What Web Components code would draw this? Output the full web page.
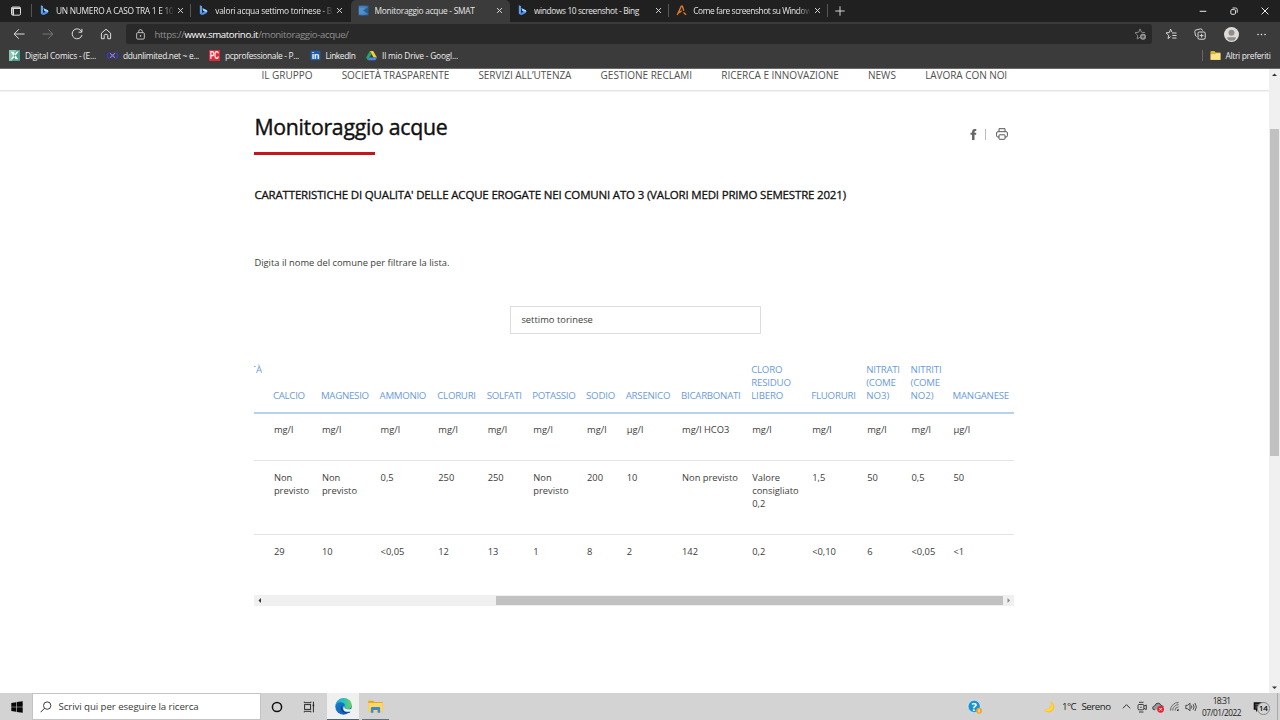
<!DOCTYPE html>
<html lang="it">
<head>
<meta charset="utf-8">
<title>Monitoraggio acque - SMAT</title>
<style>
html,body{margin:0;height:100%;overflow:hidden}
body{font-family:"Open Sans","Noto Sans",sans-serif;background:#fff}
</style>
</head>
<body>
<desktop-screen></desktop-screen>
<script>
const define = (name, html, setup) => customElements.define(name, class extends HTMLElement {
  connectedCallback() {
    if (this.shadowRoot) return;
    const t = document.createElement('template');
    t.innerHTML = typeof html === 'function' ? html(this) : html;
    this.attachShadow({mode: 'open'}).append(t.content.cloneNode(true));
    if (setup) setup(this);
  }
});

/* Inline label whose tracking is adjusted to a given width */
define('fit-text', `<style>:host{display:inline-block;flex:none;white-space:nowrap}</style><slot></slot>`, el => {
  const w = parseFloat(el.getAttribute('w')), n = el.textContent.length;
  if (w) el.style.letterSpacing = ((w - el.getBoundingClientRect().width) / n).toFixed(4) + 'px';
});

const ICONS = {
  tabs: '<rect x="1.5" y="2" width="9" height="8.2" rx="1.4" fill="none" stroke="#ddd"/><path d="M1.5 3.2h9M3.2 4v6" stroke="#ddd" stroke-width="1.6"/>',
  bing: '<path d="M2 .3L4.4 1.2V8L2.6 10 2 9.4Z" fill="#5ba2f2"/><path d="M4.9 3.5L9.6 5.6Q10.7 7 9.6 8.6L5.2 11Q3 11 2.3 9.6L7 7.3 5.8 6.5Z" fill="#4b8ff0"/><path d="M4.9 3.5L9.6 5.6Q10.4 6.4 10 7.5L5.8 6.3Z" fill="#a8d8fb"/>',
  smat: '<rect x=".5" y=".5" width="11" height="11" fill="#2b5c92"/><path d="M11.5 2L6 .8 1 1v10l5 .2 5.5-1.2L6.200 6Z" fill="#3f7fbd"/><path d="M1 3h7L5 6l4 3.5H1" fill="#5591c9"/>',
  orange: '<path d="M1.300 11L5.800 1.200h1.200l1.500 5M3.500 8.400l2.700-2.200M8.200 8.200l2.800 2.500" fill="none" stroke="#e37a2a" stroke-width="1.5"/>',
  close: '<path d="M3.3 3.3l5.4 5.4M8.7 3.3L3.3 8.7" stroke="#e2e2e2" stroke-width="1"/>',
  plus: '<path d="M6 1.3v9.4M1.3 6h9.4" stroke="#ddd" stroke-width=".95"/>',
  min: '<path d="M2.7 6.3h6.6" stroke="#ddd" stroke-width="1.1"/>',
  restore: '<rect x="2.8" y="4.6" width="4.7" height="4.7" rx="1.2" fill="none" stroke="#ddd"/><path d="M4.5 3h3.2Q9.2 3 9.2 4.5v3.2" fill="none" stroke="#ddd"/>',
  x: '<path d="M2.6 2.6l6.8 6.8M9.4 2.6L2.6 9.4" stroke="#eee" stroke-width="1"/>',
  back: '<path d="M11.5 6H1.2M5.8 1.3L1.1 6l4.7 4.7" fill="none" stroke="#ddd" stroke-width="1"/>',
  fwd: '<path d="M.5 6h10.3M6.2 1.3L10.9 6l-4.7 4.7" fill="none" stroke="#777" stroke-width="1"/>',
  reload: '<path d="M10.8 4A5 5 0 1 0 11 7M10.9.8v3.4H7.5" fill="none" stroke="#ddd" stroke-width="1"/>',
  home: '<path d="M1.4 5.2L6 1.2l4.6 4v5.5H7.8V7.5Q7.8 6.3 6 6.3T4.2 7.5v3.2H1.4Z" fill="none" stroke="#ddd" stroke-width="1" stroke-linejoin="round"/>',
  lock: '<rect x="1.8" y="4" width="8.4" height="7" rx="1.2" fill="none" stroke="#ccc"/><path d="M4 4V2.7a2 2 0 0 1 4 0V4" fill="none" stroke="#ccc"/><circle cx="6" cy="7.5" r=".9" fill="#ccc"/>',
  staradd: '<path d="M6 9.200L3.1 11l.6-3.7L1 4.7l3.7-.5L6 .9l1.5 3.3 3.5.5" fill="none" stroke="#888"/><circle cx="9" cy="8.8" r="3" fill="#999"/><path d="M9 7.2v3.2M7.4 8.8h3.2" stroke="#333" stroke-width=".8"/>',
  favs: '<path d="M5.6 8.6L3 10.6l.7-3.3L1 4.9l3.3-.4L5.6 1.2l1.3 3M7 5h4.5M7.3 7.5h4.2M7.3 10h4.2" fill="none" stroke="#ddd" stroke-width=".95"/>',
  collect: '<rect x="4" y="4" width="7.2" height="7.2" rx="1.3" fill="none" stroke="#ddd"/><path d="M7.6 5.7v3.8M5.7 7.6h3.8M2.6 8.6Q1.6 8.2 1.4 7.1L.8 3.6Q.7 2.3 1.9 2L6.6.9Q8 .7 8.5 2.5" fill="none" stroke="#ddd" stroke-width=".95"/>',
  avatar: '<circle cx="6" cy="6" r="6" fill="#dedbd8"/><circle cx="6" cy="4.5" r="2.4" fill="#908d8b"/><path d="M2.4 8.2H9.6Q9.3 11 6 11T2.4 8.2" fill="#908d8b"/>',
  dots: '<g fill="#eee"><circle cx="2.2" cy="6" r=".85"/><circle cx="6" cy="6" r=".85"/><circle cx="9.8" cy="6" r=".85"/></g>',
  comics: '<rect width="12" height="12" fill="#4da08b"/><path d="M0 0h8L3 12H0Z" fill="#85c9b2"/><path d="M2 1.800l2.600 0L10 10.200H7.2ZM10.600 1.500H8.500L2 10.200h2Z" fill="#fff"/>',
  ddu: '<path d="M3 2.800C-.6 3.300-.6 8.700 3 9.200M9 2.800c3.600.5 3.600 5.900 0 6.400" fill="none" stroke="#3f36c4" stroke-width="1.500"/><path d="M3.400 3.600l5.200 4.900M8.600 3.600L3.400 8.500" stroke="#7d79cf" stroke-width="1.300"/>',
  pc: '<rect width="12" height="12" fill="#e0293a"/><text x="6" y="10" text-anchor="middle" font-family="Liberation Sans" font-weight="bold" font-size="11" textLength="10" lengthAdjust="spacingAndGlyphs" fill="#fff">PC</text>',
  linkedin: '<rect x=".6" y=".8" width="10.8" height="10.4" fill="#1c5da8"/><text x="6" y="9.300" text-anchor="middle" font-family="Liberation Sans" font-weight="bold" font-size="9.500" fill="#fff">in</text>',
  drive: '<path d="M4.2 1.2h3.6L12 8.3H8.3Z" fill="#f8cd34"/><path d="M4.2 1.2L6 4.5 2 11.2.1 8.2Z" fill="#24a465"/><path d="M3.8 8.1H12L10.3 11.2H2Z" fill="#4688f1"/>',
  folder: '<path d="M.5 2.2Q.5 1.2 1.5 1.2H5l1.2 1.5h4.6q.7 0 .7.8v6.8q0 .7-.7.7H1.2q-.7 0-.7-.7Z" fill="#d6b53a"/><path d="M.8 4.5h4.7l1-1h4.8v7H.8Z" fill="#fbe48a"/>',
  fb: '<path d="M9 0H7.600Q4.400 0 4.400 3.200v1H2.700v2.100h1.700V12h2.700V6.300h1.700l.3-2.100H7.100V3.200Q7.100 2.100 8 2.100H9Z" fill="#666"/>',
  print: '<g fill="none" stroke="#555" stroke-width="1"><path d="M3 3.6V.7h6v2.9M3 9H1.8Q.6 9 .6 7.8V5q0-1.3 1.3-1.3h8.2q1.3 0 1.3 1.3v2.8Q11.4 9 10.2 9H9"/><rect x="3" y="6.8" width="6" height="4.5" rx=".5"/></g>',
  win: '<path d="M.3 1.9L5.2 1.2v4.5H.3ZM5.8 1.1L11.7.3v5.4H5.8ZM.3 6.3h4.9v4.5L.3 10.1ZM5.8 6.3h5.9v5.4l-5.9-.8Z" fill="#060606"/>',
  search: '<circle cx="7.2" cy="4.6" r="3.7" fill="none" stroke="#333" stroke-width=".95"/><path d="M4.6 7.2L.7 11.2" stroke="#333"/>',
  cortana: '<circle cx="6" cy="6" r="4.600" fill="none" stroke="#111" stroke-width="1.500"/>',
  task: '<g fill="none" stroke="#222" stroke-width=".95"><rect x="1.6" y="3.6" width="6" height="4.8"/><path d="M1.3.6v1.1h6.6V.6M1.3 11.4v-1.1h6.6v1.1M10.4.7v10.6"/></g><path d="M9.7 3.6h1.5v1.6H9.7z" fill="#222"/>',
  edge: '<defs><linearGradient id="g1" x1="0" x2="1"><stop stop-color="#1bb0df"/><stop offset=".55" stop-color="#2fc3b5"/><stop offset="1" stop-color="#68d552"/></linearGradient><linearGradient id="g2" x1="0" y1="0" x2="1" y2="1"><stop stop-color="#1683d4"/><stop offset="1" stop-color="#1553ae"/></linearGradient></defs><circle cx="6" cy="6" r="5.8" fill="url(#g2)"/><path d="M.2 5.8C.6 2.2 3.1.2 6.2.2c3.4 0 5.6 2.4 5.6 4.7 0 2-1.5 3-3.1 3-1.5 0-1.9-.5-1.9-.9 0-.5.6-.7.4-1.7C6.800 3.700 5.200 3 3.700 3 1.800 3 .6 4.300.2 5.800" fill="url(#g1)"/><path d="M4.7 5.5c-1.600 2.200.6 5.200 3.400 5 1.200-.1 2.200-.7 2.800-1l-.7 1C8 10.900 4.800 9.500 4.700 5.500" fill="#0d3d83"/><path d="M6.900 5.200q-.7 1-.1 2 1.200 1.400 5.200.3L11 9.300q-1 .6-2.600.4-2.600-.2-2.600-2.500 0-1.400 1.100-2" fill="#eef5f6"/>',
  explorer: '<path d="M.2 1.3h4l1 1h6.600v7.700H.2Z" fill="#e8a91f"/><path d="M.2 3.200h11.600v6.900H.2Z" fill="#ffd765"/><path d="M2.300 11V7.300q0-.9.9-.9h5.600q.9 0 .9.9V11H7.700V8.800H4.300V11Z" fill="#388bd0"/>',
  help: '<circle cx="5.300" cy="5.500" r="5.200" fill="#1593cf" stroke="#eef" stroke-width=".5"/><text x="5.300" y="9" text-anchor="middle" font-family="Open Sans" font-weight="bold" font-size="9.500" fill="#fff">?</text><circle cx="9.500" cy="9.200" r="2.500" fill="#f0a52c"/><path d="M9.500 8v2.500" stroke="#fff" stroke-width=".8"/>',
  moon: '<path d="M7.300.5c5 1.500 5.300 8.200 1 10.200C5.500 12 2 11 .8 8.500 6 9.500 9.200 5.500 7.300.5" fill="#ffc02b"/><path d="M7.500.8c2.800 4.200.2 9-6.400 7.900 3.200 2 7.400 1.500 8.500-1.500.8-2.600-.2-4.900-2.100-6.400" fill="#ffe04a"/>',
  caret: '<path d="M2 8l4-4 4 4" fill="none" stroke="#222" stroke-width="1"/>',
  meet: '<g fill="none" stroke="#222" stroke-width=".85"><rect x="2" y="3.500" width="5.800" height="5.300" rx="1"/><path d="M8 5l2.300-1v4.500L8 7.500M3 1.300h4.500M3 11h4.500"/></g><circle cx="5" cy="6.200" r=".8" fill="#444"/>',
  cloud: '<path d="M2.800 9Q.5 8.800.6 6.800.9 5 2.800 4.900 3.500 2 6.300 2.200 8.500 2.400 9 4.500 11 4.600 11.300 6" fill="#999" stroke="#333" stroke-width=".9"/><circle cx="8.600" cy="8.300" r="3.400" fill="#e8222f"/><path d="M7.300 7l2.600 2.600M9.900 7L7.300 9.600" stroke="#fff" stroke-width=".9"/>',
  wifi: '<g fill="none" stroke="#555" stroke-width=".9"><path d="M1.500 10.500A9 9 0 0 1 10.500 1.500M4 10.500A6.500 6.500 0 0 1 10.500 4M6.500 10.500A4 4 0 0 1 10.500 6.500"/></g><path d="M8.500 10.800a2 2 0 0 1 2-2v2Z" fill="#333"/><path d="M1.500 10.500l9-9" stroke="#888" stroke-width=".4"/>',
  volume: '<path d="M.8 4.300h1.900L5 2.200v7.600L2.700 7.700H.8Z" fill="none" stroke="#333" stroke-width=".85"/><path d="M6.400 4.500q1 1.500 0 3M8.100 3.200q2 2.800 0 5.600M9.900 2q3 4 0 8" fill="none" stroke="#333" stroke-width=".85"/>',
  note: '<path d="M.7 1.200h10.600v7.600H5L3 11V8.800H.7Z" fill="#111"/><path d="M2.300 3.400h7.400M2.300 5.100h7.400M2.300 6.800h5" stroke="#aaa" stroke-width=".5"/>'
};
define('ui-icon', el => {
  const s = el.getAttribute('s') || 12;
  return `<style>:host{display:block;flex:none;width:${s}px;height:${s}px}svg{display:block;overflow:visible}</style>
  <svg width="${s}" height="${s}" viewBox="0 0 12 12">${ICONS[el.getAttribute('n')]}</svg>`;
});

define('browser-tab', el => `<style>
:host{display:flex;box-sizing:border-box;flex:none;width:159.300px;height:21px;padding:0 0 0 7px;align-items:center;color:#e6e6e6;font-size:8.400px;position:relative}
:host([active]){background:#3b3b3b;border-radius:5px 5px 0 0;height:23px;padding-bottom:2px}
:host([line])::after{content:"";position:absolute;right:0;top:4px;height:13px;width:1px;background:#555}
.t{width:116.500px;overflow:hidden;margin-left:6px;white-space:nowrap;line-height:14px}
:host([fade]) .t{-webkit-mask-image:linear-gradient(90deg,#000 90%,transparent 101%);mask-image:linear-gradient(90deg,#000 90%,transparent 101%)}
.c{margin-left:2.500px}
</style><ui-icon n="${el.getAttribute('icon')}" s="11"></ui-icon><div class="t"><slot></slot></div><ui-icon class="c" n="close" s="11"></ui-icon>`);

define('tab-strip', `<style>
:host{display:flex;height:22px;background:#202020;align-items:flex-start}
.a{width:32px;height:21px;box-sizing:border-box;padding:5px 0 0 10px;position:relative}
.a::after{content:"";position:absolute;right:0;top:4px;height:13px;width:1px;background:#555}
.p{padding:4.500px 0 0 6px}.w{margin-left:auto;display:flex;gap:18.600px;padding:5px 9.500px 0 0}
</style>
<div class="a"><ui-icon n="tabs"></ui-icon></div>
<browser-tab icon="bing" line fade><fit-text w="117.500">UN NUMERO A CASO TRA 1 E 10</fit-text></browser-tab>
<browser-tab icon="bing" fade><fit-text w="118.500">valori acqua settimo torinese - Bi</fit-text></browser-tab>
<browser-tab icon="smat" active><fit-text w="100">Monitoraggio acque - SMAT</fit-text></browser-tab>
<browser-tab icon="bing" line><fit-text w="105">windows 10 screenshot - Bing</fit-text></browser-tab>
<browser-tab icon="orange" line fade><fit-text w="118">Come fare screenshot su Window</fit-text></browser-tab>
<div class="p"><ui-icon n="plus"></ui-icon></div>
<div class="w"><ui-icon n="min"></ui-icon><ui-icon n="restore"></ui-icon><ui-icon n="x"></ui-icon></div>`);

define('address-bar', `<style>
:host{display:flex;height:24px;background:#3b3b3b;align-items:center;padding-left:12.500px}
.n{display:flex;gap:17.300px;width:113px}
.u{display:flex;align-items:center;width:1026.500px;height:20px;background:#292929;border-radius:3px;box-sizing:border-box;padding:0 6.500px 0 9px;font-size:9.700px;color:#8f8f8f}
.u fit-text{margin-left:9px}b{font-weight:400;color:#fff}.u ui-icon:last-child{margin-left:auto}
.r{display:flex;align-items:center;gap:17.500px;margin-left:12.500px}
</style>
<div class="n"><ui-icon n="back"></ui-icon><ui-icon n="fwd"></ui-icon><ui-icon n="reload"></ui-icon><ui-icon n="home"></ui-icon></div>
<div class="u"><ui-icon n="lock" s="11"></ui-icon><fit-text w="194">https://<b>www.smatorino.it</b>/monitoraggio-acque/</fit-text><ui-icon n="staradd"></ui-icon></div>
<div class="r"><ui-icon n="favs"></ui-icon><ui-icon n="collect"></ui-icon><ui-icon n="avatar" s="15"></ui-icon><ui-icon n="dots" s="11"></ui-icon></div>`);

define('book-mark', el => `<style>
:host{display:flex;align-items:center;box-sizing:border-box;width:${el.getAttribute('box')}px;flex:none;gap:5px}</style>
<ui-icon n="${el.getAttribute('icon')}" s="11"></ui-icon><slot></slot>`);
define('bookmark-bar', `<style>
:host{display:flex;height:23px;background:#3b3b3b;align-items:center;padding-left:9px;box-sizing:border-box;color:#eee;font-size:8.400px;border-bottom:1px solid #6a6a6a;padding-bottom:3px}
.r{margin-left:auto;display:flex;align-items:center;border-left:1px solid #666;padding-left:7px;height:11px}</style>
<book-mark icon="comics" box="98"><fit-text w="71">Digital Comics - (E...</fit-text></book-mark>
<book-mark icon="ddu" box="102"><fit-text w="76">ddunlimited.net ~ e...</fit-text></book-mark>
<book-mark icon="pc" box="100.500"><fit-text w="74">pcprofessionale - P...</fit-text></book-mark>
<book-mark icon="linkedin" box="56.500"><fit-text w="30">LinkedIn</fit-text></book-mark>
<book-mark icon="drive" box="100"><fit-text w="76">Il mio Drive - Googl...</fit-text></book-mark>
<div class="r"><book-mark icon="folder" box="70.500"><fit-text w="45">Altri preferiti</fit-text></book-mark></div>`);

const COLS = [['CALCIO',32,'mg/l','Non<br>previsto','29',48],['MAGNESIO',48,'mg/l','Non<br>previsto','10',58.7],['AMMONIO',46.5,'mg/l','0,5','&lt;0,05',57.7],['CLORURI',38.5,'mg/l','250','12',49.4],['SOLFATI',35,'mg/l','250','13',45.7],['POTASSIO',43,'mg/l','Non<br>previsto','1',53.7],['SODIO',29,'mg/l','200','8',39.7],['ARSENICO',44.5,'µg/l','10','2',55.3],['BICARBONATI',59.5,'mg/l HCO3','Non previsto','142',70.2],['CLORO|RESIDUO|LIBERO',[31,39.5,32],'mg/l','Valore<br>consigliato<br>0,2','0,2',60],['FLUORURI',44.5,'mg/l','1,5','&lt;0,10',55],['NITRATI|(COME|NO3)',[33.5,29.5,23],'mg/l','50','6',44.3],['NITRITI|(COME|NO2)',[31,29.5,23],'mg/l','0,5','&lt;0,05',42],['MANGANESE',56.5,'µg/l','50','&lt;1',60]];
define('water-table', () => {
  const head = COLS.map(c => '<div>' + c[0].split('|').map((l, i) => `<fit-text w="${Array.isArray(c[1]) ? c[1][i] : c[1]}">${l}</fit-text>`).join('') + '</div>').join('');
  const row = k => '<div></div>' + COLS.map(c => `<div>${c[k]}</div>`).join('');
  return `<style>
:host{display:block;width:760px;font-size:9.330px;line-height:13.330px;color:#3c3c3c;overflow:hidden}
.r{display:grid;grid-template-columns:18.500px ${COLS.map(c => c[5] + 'px').join(' ')};box-sizing:border-box;white-space:nowrap}
.h{color:#6b9bdb;align-items:end;height:51px;font-size:9.700px;border-bottom:2px solid #b8d1ee;padding-bottom:9px}
.h div{display:flex;flex-direction:column;align-items:flex-start}
.h .f{align-self:start;width:7.900px;overflow:hidden;align-items:flex-end}
.b{padding:10px 0 0 1px;border-bottom:1px solid #e3e3e3}
.b.u{padding-top:9.300px}
</style><div class="r h"><div class="f"><fit-text w="12">TÀ</fit-text></div>${head}</div>
<div class="r b u" style="height:47px">${row(2)}</div><div class="r b" style="height:74px">${row(3)}</div><div class="r b" style="height:60px;border:0">${row(4)}</div>`;
});

define('scroll-bar', el => {
  const v = el.hasAttribute('vertical'), a = el.getAttribute('before'), l = el.getAttribute('len');
  const tri = (d, c) => `<svg width="11" height="11" viewBox="0 0 11 11"><path d="${d}" fill="${c}"/></svg>`;
  return `<style>:host{display:flex;flex-direction:${v ? 'column' : 'row'};background:#f0f0f0;flex:none;justify-content:space-between;${v ? 'width:11.500px' : 'height:11px'}}
  svg{display:block;flex:none}.t{flex:1;display:flex;flex-direction:inherit}.g{flex:0 0 ${a}px}.k{flex:0 0 ${l}px;background:#c1c1c1;margin:${v ? '0 1px' : '1px 0'}}</style>
  ${v ? tri('M3 7L5.500 4.500 8 7Z', '#333') : tri('M7 3L4.500 5.500 7 8Z', '#333')}<div class="t"><div class="g"></div><div class="k"></div></div>${v ? tri('M3 4.500L5.500 7 8 4.500Z', '#333') : tri('M4.500 3L7 5.500 4.500 8Z', '#888')}`;
});

define('site-nav', `<style>:host{display:flex;height:22px;box-sizing:border-box;border-bottom:1px solid #e4e4e4;box-shadow:0 1px 1px #f3f3f3;padding-left:261.500px;gap:29.200px;font-size:10px;line-height:12px;color:#505050}</style>
<fit-text w="51">IL GRUPPO</fit-text><fit-text w="107.500">SOCIETÀ TRASPARENTE</fit-text><fit-text w="93">SERVIZI ALL’UTENZA</fit-text><fit-text w="91.500">GESTIONE RECLAMI</fit-text><fit-text w="117.500">RICERCA E INNOVAZIONE</fit-text><fit-text w="28">NEWS</fit-text><fit-text w="82">LAVORA CON NOI</fit-text>`);

define('page-view', `<style>:host{display:flex;height:624px;background:#fff}
.p{flex:1;min-width:0}main{width:760px;margin-left:254.400px;color:#3c3c3c}
.top{display:flex;justify-content:space-between;height:61px;padding-top:19px}
h1{font-size:21.300px;line-height:34px;font-weight:500;color:#111;margin:0 0 7.500px;display:flex;-webkit-text-stroke:.4px #111}
.bar{width:120.500px;height:3.300px;background:#c4161c}
.s{display:flex;align-items:center;height:12px;margin:18px 6.500px 0 0;gap:6px}.s i{width:1px;height:11px;background:#bbb;margin-right:3.500px}
h2{font-size:11.500px;font-weight:500;color:#111;margin:14px 0 0;line-height:20px;display:flex;-webkit-text-stroke:.3px #111}
.f{font-size:9.330px;line-height:14px;margin-top:51px}
.i{width:250.500px;height:28px;box-sizing:border-box;border:1px solid #ddd;margin:35.500px 0 0 256px;padding:6px 10px;font-size:9.330px;line-height:14px}
water-table{margin-top:29px}
</style><div class="p"><site-nav></site-nav><main>
<div class="top"><div><h1><fit-text w="193">Monitoraggio acque</fit-text></h1><div class="bar"></div></div><div class="s"><ui-icon n="fb" s="11"></ui-icon><i></i><ui-icon n="print" s="12"></ui-icon></div></div>
<h2><fit-text w="591.500">CARATTERISTICHE DI QUALITA' DELLE ACQUE EROGATE NEI COMUNI ATO 3 (VALORI MEDI PRIMO SEMESTRE 2021)</fit-text></h2>
<div class="f"><fit-text w="195">Digita il nome del comune per filtrare la lista.</fit-text></div>
<div class="i"><fit-text w="71.500">settimo torinese</fit-text></div>
<water-table></water-table><scroll-bar before="231" len="507"></scroll-bar>
</main></div><scroll-bar vertical before="48.500" len="327"></scroll-bar>`);

define('task-bar', `<style>:host{display:flex;height:27px;background:#d3d3d3;align-items:center;color:#1c1c1c;font-size:9.700px}
.w{width:33px;display:flex;justify-content:center}
.q{width:227px;height:25px;background:#fff;display:flex;align-items:center;gap:7px;box-sizing:border-box;padding-left:6.500px;color:#3a3a3a;outline:.5px solid #c4c4c4;margin-right:1px}
.a{width:32px;height:27px;box-sizing:border-box;display:flex;align-items:center;justify-content:center}
.e{background:#f0f0f0;margin-left:2px;border-bottom:1.500px solid #4b6570}.x{width:27px;margin-left:3px;border-bottom:1.500px solid #5f727a}
.r{margin-left:auto;display:flex;align-items:center;height:27px}
.c{width:40px;margin-left:5px;text-align:center;font-size:8.300px;line-height:12px}
.n{position:relative;margin-left:11px;width:24px}
.b{position:absolute;left:4.500px;top:1.500px;width:10.500px;height:10.500px;border:1px solid #888;border-radius:50%;background:#d3d3d3;font-size:8px;line-height:10.500px;text-align:center;color:#000;-webkit-text-stroke:.2px #000;letter-spacing:-.3px}
.d{height:27px;width:1px;background:#aaa;margin-right:2.500px}
</style>
<div class="w"><ui-icon n="win" s="12"></ui-icon></div>
<div class="q"><ui-icon n="search" s="12"></ui-icon><fit-text w="140">Scrivi qui per eseguire la ricerca</fit-text></div>
<div class="a"><ui-icon n="cortana"></ui-icon></div><div class="a"><ui-icon n="task"></ui-icon></div>
<div class="a e"><ui-icon n="edge" s="17"></ui-icon></div><div class="a x"><ui-icon n="explorer" s="15"></ui-icon></div>
<div class="r"><ui-icon n="help" s="14"></ui-icon><ui-icon n="moon" s="12" style="margin-left:61px"></ui-icon>
<fit-text w="14" style="margin-left:7px">1°C</fit-text><fit-text w="29" style="margin-left:5.500px">Sereno</fit-text>
<ui-icon n="caret" s="11" style="margin-left:10px"></ui-icon><ui-icon n="meet" style="margin-left:4.500px"></ui-icon><ui-icon n="cloud" style="margin-left:4px"></ui-icon><ui-icon n="wifi" s="11" style="margin-left:4.500px"></ui-icon><ui-icon n="volume" s="12" style="margin-left:5px"></ui-icon>
<div class="c"><fit-text w="17.500">18:31</fit-text><fit-text w="39">07/01/2022</fit-text></div>
<div class="n"><ui-icon n="note" s="12"></ui-icon><div class="b">14</div></div><div class="d"></div></div>`);

define('desktop-screen', `<style>:host{display:flex;flex-direction:column;width:1280px;height:720px;overflow:hidden}</style>
<tab-strip></tab-strip><address-bar></address-bar><bookmark-bar></bookmark-bar><page-view></page-view><task-bar></task-bar>`);
</script>
</body>
</html>
